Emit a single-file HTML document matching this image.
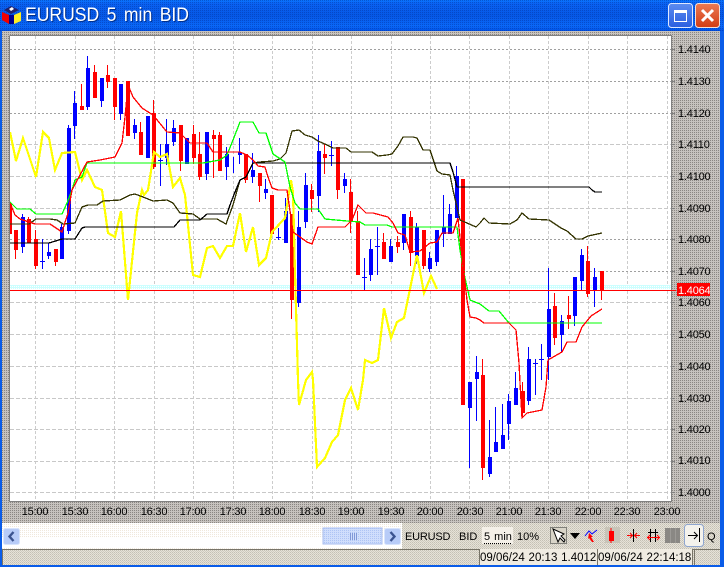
<!DOCTYPE html>
<html><head><meta charset="utf-8"><title>EURUSD 5 min BID</title>
<style>html,body{margin:0;padding:0;width:724px;height:567px;overflow:hidden;background:#c4c0bc}svg{display:block}text{font-family:"Liberation Sans",sans-serif;fill:#000}</style></head>
<body>
<svg xmlns="http://www.w3.org/2000/svg" width="724" height="567" viewBox="0 0 724 567">
<defs>
<pattern id="g" width="2" height="2" patternUnits="userSpaceOnUse"><rect width="2" height="2" fill="#c6c2be"/><rect width="1" height="1" fill="#8a8682"/></pattern>
<pattern id="c" width="2" height="2" patternUnits="userSpaceOnUse"><rect width="2" height="2" fill="#e6e2d8"/><rect width="1" height="1" fill="#c4c0b4"/><rect x="1" y="1" width="1" height="1" fill="#d0ccc0"/></pattern>
<pattern id="w" width="2" height="2" patternUnits="userSpaceOnUse"><rect width="2" height="2" fill="#fff"/><rect width="1" height="1" fill="#f0e8dc"/></pattern>
<pattern id="b" width="2" height="2" patternUnits="userSpaceOnUse"><rect width="2" height="2" fill="#ccffff"/><rect width="1" height="1" fill="#fff"/></pattern>
<pattern id="t" width="2" height="2" patternUnits="userSpaceOnUse"><rect width="1" height="1" fill="#0030a0" opacity=".45"/></pattern>
<pattern id="s" width="2" height="2" patternUnits="userSpaceOnUse"><rect width="2" height="2" fill="#d0defc"/><rect width="1" height="1" fill="#aec4f4"/></pattern>
<linearGradient id="tb" x1="0" y1="0" x2="0" y2="1"><stop offset="0" stop-color="#0a76ff"/><stop offset=".12" stop-color="#0a62f2"/><stop offset=".5" stop-color="#0658e6"/><stop offset=".85" stop-color="#0a68f8"/><stop offset="1" stop-color="#0050e4"/></linearGradient>
<linearGradient id="cl" x1="0" y1="0" x2="0" y2="1"><stop offset="0" stop-color="#ec7a52"/><stop offset="1" stop-color="#d23c14"/></linearGradient>
<linearGradient id="mx" x1="0" y1="0" x2="0" y2="1"><stop offset="0" stop-color="#5c8cf0"/><stop offset="1" stop-color="#2a5ee0"/></linearGradient>
<clipPath id="pl"><rect x="10" y="36" width="661" height="465"/></clipPath>
</defs>

<!-- window frame -->
<rect width="724" height="567" fill="#0a5ce8"/>
<rect width="724" height="31" fill="url(#tb)"/>
<rect width="724" height="31" fill="url(#t)"/>
<rect x="2" y="31" width="718" height="492" fill="url(#g)"/>

<!-- title icon -->
<path d="M2 12L9 15V24L2 20Z" fill="#f00000"/>
<path d="M14 15L21 12V21L14 24Z" fill="#ffee22"/>
<path d="M9 15H14V24H9Z" fill="#000090"/>
<path d="M4 10L11 6L19 10L11 14Z" fill="#20206a"/>
<path d="M9 9L12 7L14 9L11 11Z" fill="#fff"/>
<text transform="translate(26 22) scale(.925 1)" font-size="19" style="fill:#00308c" word-spacing="2.8">EURUSD 5 min BID</text>
<text transform="translate(25 21) scale(.925 1)" font-size="19" style="fill:#fff" word-spacing="2.8">EURUSD 5 min BID</text>

<!-- title buttons -->
<rect x="668.5" y="3.5" width="24" height="24" rx="3" fill="url(#mx)" stroke="#dfe8ff"/>
<rect x="674.5" y="10.5" width="12" height="11" fill="none" stroke="#fff"/>
<rect x="674" y="10" width="13" height="3" fill="#fff"/>
<rect x="695.5" y="3.5" width="24" height="24" rx="3" fill="url(#cl)" stroke="#f4e0d8"/>
<path d="M702 10L713 21M713 10L702 21" stroke="#fff" stroke-width="3" fill="none"/>

<!-- plot -->
<rect x="10" y="36" width="661" height="465" fill="#fff"/>
<path d="M9.5 36V501.5H671.5V35.5H9.5" fill="none" stroke="#808080" shape-rendering="crispEdges"/>
<g shape-rendering="crispEdges" fill="none">
<path d="M35.5 36V501M75.5 36V501M114.5 36V501M154.5 36V501M193.5 36V501M233.5 36V501M272.5 36V501M312.5 36V501M351.5 36V501M391.5 36V501M430.5 36V501M469.5 36V501M509.5 36V501M548.5 36V501M588.5 36V501M627.5 36V501M667.5 36V501" stroke="#cccccc" stroke-dasharray="3 2"/>
<path d="M10 49.5H671M10 81.5H671M10 113.5H671M10 239.5H671M10 271.5H671" stroke="#a0a0a0" stroke-dasharray="2 2"/>
<path d="M10 144.5H671M10 176.5H671M10 208.5H671M10 302.5H671M10 334.5H671M10 366.5H671M10 398.5H671M10 429.5H671M10 461.5H671M10 492.5H671" stroke="#c8c8c8" stroke-dasharray="4 2"/>
</g>
<rect x="10" y="285" width="661" height="4" fill="url(#b)"/>

<g clip-path="url(#pl)" shape-rendering="crispEdges" fill="none">
<!-- blue wicks -->
<path stroke="#0000ff" stroke-width="1" d="M22.5 214V253M42.5 239V269M48.5 243V259M61.5 224V259M68.5 125V234M74.5 91V139M87.5 56V110M101.5 78V107M120.5 84V120M134.5 119V139M147.5 116V158M160.5 144V186M166.5 119V165M173.5 120V146M186.5 138V164M206.5 132V180M226.5 147V180M233.5 157V173M239.5 138V164M252.5 153V183M265.5 179V199M278.5 228V240M285.5 198V243M298.5 211V307M305.5 173V228M318.5 135V212M331.5 141V166M344.5 173V193M364.5 258V290M370.5 239V281M377.5 227V275M390.5 239V262M403.5 214V250M416.5 223V264M429.5 252V272M436.5 230V266M443.5 195V247M449.5 204V234M456.5 166V218M469.5 382V468M476.5 356V421M489.5 420V477M495.5 407V452M502.5 404V449M508.5 394V440M515.5 372V405M528.5 347V405M535.5 359V395M541.5 344V380M548.5 268V380M561.5 315V352M574.5 277V326M581.5 249V290M594.5 268V307"/>
<!-- blue dojis -->
<path stroke="#0000ff" stroke-width="1" d="M40 261.5h5M158 160.5h5M276 237.5h5M329 155.5h5M362 277.5h5M375 246.5h5M533 363.5h5M539 359.5h5"/>
<!-- blue bodies -->
<path stroke="#0000ff" stroke-width="4" d="M23 217V247M49 252V256M62 227V259M69 128V231M75 103V126M88 68V107M102 78V101M121 84V114M135 125V133M148 116V158M167 144V158M174 128V142M187 138V164M207 132V174M227 154V167M240 152V155M253 170V177M266 189V193M286 211V243M299 227V303M306 185V222M319 151V196M345 179V186M371 249V275M391 246V262M404 214V243M417 227V256M430 258V269M437 230V262M444 227V234M450 214V234M457 176V218M470 382V408M477 372V379M490 457V474M496 442V452M503 435V449M509 401V424M516 388V405M529 359V401M549 309V357M562 321V335M575 277V316M582 255V281M595 277V290"/>
<!-- red wicks -->
<path stroke="#ff0000" stroke-width="1" d="M15.5 230V259M28.5 217V243M35.5 230V269M55.5 249V266M81.5 84V110M94.5 65V98M107.5 65V88M114.5 78V120M127.5 81V136M140.5 122V155M153.5 100V169M180.5 125V171M193.5 125V164M199.5 132V180M213.5 130V178M219.5 132V171M245.5 154V183M259.5 173V202M291.5 214V319M311.5 184V212M324.5 144V174M337.5 147V199M350.5 179V233M357.5 211V275M383.5 233V259M397.5 236V253M410.5 211V266M423.5 230V269M482.5 359V480M522.5 382V418M554.5 293V345M568.5 296V329M587.5 246V297M601.5 271V300"/>
<!-- red bodies -->
<path stroke="#ff0000" stroke-width="4" d="M16 230V250M29 219V243M36 239V266M56 249V262M82 106V110M95 72V98M108 75V82M115 78V107M128 81V136M141 132V155M154 113V167M181 125V161M194 134V158M200 154V177M214 135V139M220 135V171M246 154V180M260 173V186M272 195V234M292 214V300M312 190V199M325 154V158M338 147V190M351 192V221M358 221V275M384 242V259M398 242V247M411 217V253M424 230V266M463 179V405M483 375V468M523 391V413M555 306V338M569 315V319M588 261V294M602 271V290"/>
<path stroke="#ff0000" stroke-width="2" d="M11 203V234"/>

<!-- yellow -->
<polyline stroke="#ffff00" stroke-width="2.2" points="10,132 16,161 23,138 36,177 43,132 49,138 55,170 62,153 75,152 82,180 87,170 95,187 102,190 108,233 115,237 121,211 128,300 137,213 142,190 144,195 148,190 154,152 160,157 167,154 173,187 180,178 185,195 193,275 200,277 207,248 213,246 220,258 227,246 233,246 240,213 246,252 253,227 259,265 266,258 272,232 285,218 291,180 293,192 295,273 298,380 299,405 306,380 312,372 313,380 317,467 325,458 332,442 338,435 345,400 351,388 358,410 363,380 365,360 372,363 378,360 384,308 391,338 397,322 404,318 417,255 424,293 431,276 437,289"/>
<!-- olive -->
<polyline stroke="#333300" stroke-width="1.3" points="10,224 29,224 36,219 50,219 57,220 63,224 75,223 82,207 88,205 97,205 103,201 120,200 130,195 135,194 143,197 153,201 167,200 173,203 180,213 193,214 200,219 217,219 226,224 233,205 240,180 246,177 253,163 260,162 273,161 280,159 286,153 289,142 292,131 299,130 305,135 312,137 318,141 327,145 333,148 346,148 351,152 372,152 378,156 387,155 392,154 398,146 403,137 413,137 417,138 423,150 430,150 437,171 442,174 450,175 453,190 456,203 460,220 467,223 476,227 480,223 484,218 489,223 510,224 517,220 522,213 529,219 549,220 561,228 567,231 576,239 582,239 588,236 602,233"/>
<!-- black -->
<polyline stroke="#000" stroke-width="1.3" points="10,243 49,243 62,239 75,239 82,228 85,227 174,227 180,220 200,220 207,214 227,214 230,205 235,192 240,180 246,177 253,163 450,163 453,172 457,187 589,187 592,190 595,192 602,192"/>
<!-- green -->
<polyline stroke="#00ff00" stroke-width="1.3" points="10,202 17,209 30,209 36,214 62,214 67,203 72,190 75,180 82,177 87,163 203,163 220,160 227,155 233,140 240,122 253,122 259,133 266,133 273,154 285,162 290,187 295,203 300,209 318,209 325,219 347,221 360,222 365,225 387,225 392,227 457,227 460,250 465,278 470,300 480,304 489,311 499,311 509,323 602,323"/>
<!-- red MA -->
<polyline stroke="#ff0000" stroke-width="1.3" points="10,203 15,215 20,219 35,224 50,224 62,232 68,213 72,190 80,175 87,162 100,160 110,158 115,157 122,143 125,117 128,85 133,97 142,108 153,115 167,132 180,133 190,143 207,143 213,152 240,152 247,155 253,160 258,166 265,167 268,177 272,188 278,190 287,190 293,232 307,242 312,244 318,227 345,227 352,220 358,205 366,213 373,213 388,217 393,223 398,233 405,235 410,252 420,251 430,243 437,242 442,233 453,233 458,218 462,257 467,300 470,317 476,318 480,320 484,323 509,323 516,330 519,363 520,383 522,418 527,413 542,410 546,387 548,360 562,352 567,342 576,342 582,327 591,316 602,309"/>
</g>
<path d="M10 290.5H676" stroke="#ff0000" shape-rendering="crispEdges"/>

<!-- price axis -->
<g font-size="11" letter-spacing="-.2">
<text x="678" y="53">1.4140</text><text x="678" y="85">1.4130</text><text x="678" y="117">1.4120</text><text x="678" y="148">1.4110</text><text x="678" y="180">1.4100</text><text x="678" y="212">1.4090</text><text x="678" y="243">1.4080</text><text x="678" y="275">1.4070</text><text x="678" y="306">1.4060</text><text x="678" y="338">1.4050</text><text x="678" y="370">1.4040</text><text x="678" y="402">1.4030</text><text x="678" y="433">1.4020</text><text x="678" y="464">1.4010</text><text x="678" y="496">1.4000</text>
</g>
<rect x="677" y="283" width="33" height="13" fill="#ff0000"/>
<text x="678" y="294" font-size="11" letter-spacing="-.2" style="fill:#fff">1.4064</text>
<path d="M672 49.5h3M672 81.5h3M672 113.5h3M672 144.5h3M672 176.5h3M672 208.5h3M672 239.5h3M672 271.5h3M672 302.5h3M672 334.5h3M672 366.5h3M672 398.5h3M672 429.5h3M672 461.5h3M672 492.5h3" stroke="#808080" shape-rendering="crispEdges"/>

<!-- time axis -->
<g font-size="11" letter-spacing="-.2" text-anchor="middle">
<text x="35" y="515">15:00</text><text x="75" y="515">15:30</text><text x="114" y="515">16:00</text><text x="154" y="515">16:30</text><text x="193" y="515">17:00</text><text x="233" y="515">17:30</text><text x="272" y="515">18:00</text><text x="312" y="515">18:30</text><text x="351" y="515">19:00</text><text x="391" y="515">19:30</text><text x="430" y="515">20:00</text><text x="470" y="515">20:30</text><text x="509" y="515">21:00</text><text x="548" y="515">21:30</text><text x="588" y="515">22:00</text><text x="627" y="515">22:30</text><text x="667" y="515">23:00</text>
</g>

<!-- toolbar row -->
<rect x="2" y="523" width="718" height="26" fill="url(#w)"/>
<rect x="2" y="537" width="400" height="11" fill="#fff"/>
<rect x="402" y="523" width="318" height="26" fill="url(#c)"/>
<rect x="3.5" y="528.5" width="16" height="16" rx="2" fill="#b8ccf8" stroke="#d8e4fc"/>
<path d="M13.5 532L9.5 536.5L13.5 541" fill="none" stroke="#3c5490" stroke-width="2.4"/>
<rect x="323" y="528" width="59" height="16" fill="url(#s)" stroke="#a8bef0"/>
<path d="M350.5 533v7M352.5 533v7M354.5 533v7M356.5 533v7" stroke="#8098d8" shape-rendering="crispEdges"/>
<rect x="384.5" y="528.5" width="16" height="16" rx="2" fill="#b8ccf8" stroke="#d8e4fc"/>
<path d="M390.5 532L394.5 536.5L390.5 541" fill="none" stroke="#3c5490" stroke-width="2.4"/>
<text x="405" y="540" font-size="11" letter-spacing="-.2">EURUSD</text>
<text x="459" y="540" font-size="11">BID</text>
<rect x="482" y="527" width="31" height="17" fill="#f4f0e8"/>
<text x="484" y="540" font-size="11" word-spacing="1">5 min</text>
<path d="M484 543.5h27" stroke="#000" stroke-dasharray="1 1" shape-rendering="crispEdges"/>
<text x="517" y="540" font-size="11">10%</text>

<!-- tool icons -->
<rect x="550.5" y="527.5" width="16" height="16" fill="#d8d4c8" stroke="#80807a"/>
<path d="M553 529L558 542L560 538L564 542L565 540L561 536L564 534Z" fill="#fff" stroke="#000"/>
<path d="M570 533H580L575 539Z" fill="#000"/>
<path d="M585 536L589 531L592 534L597 530" fill="none" stroke="#0000ff"/>
<path d="M589 533L593 537H591L594 542H592L589 538L588 539Z" fill="#ff0000"/>
<rect x="605" y="527" width="15" height="16" fill="#c8c4b8"/>
<path d="M611 528V543" stroke="#ff0000" shape-rendering="crispEdges"/>
<rect x="609" y="531" width="5" height="10" fill="#ff0000"/>
<path d="M633.5 529V542" stroke="#000" shape-rendering="crispEdges"/>
<path d="M627 535.5H632M630 533L632.5 535.5L630 538M640 535.5H635M637 533L634.5 535.5L637 538" fill="none" stroke="#ff0000"/>
<path d="M650.5 529V542M655.5 529V542M648 532.5H658" stroke="#000" shape-rendering="crispEdges"/>
<path d="M647 537.5H660M650 535L647.5 537.5L650 540M657 535L659.5 537.5L657 540" fill="none" stroke="#ff0000"/>
<rect x="665" y="528" width="15" height="15" fill="#8a8884"/>
<path d="M670.5 528V543M675.5 528V543" stroke="#9c9a96" shape-rendering="crispEdges"/>
<rect x="684.5" y="524.5" width="19" height="22" rx="3" fill="#f4f2ec" stroke="#8fa6d0"/>
<path d="M688 535.5H697M694 532L697.5 535.5L694 539" fill="none" stroke="#000"/>
<path d="M699.5 528V542" stroke="#000" shape-rendering="crispEdges"/>
<text x="707" y="540" font-size="11">Q</text>

<!-- status bar -->
<rect x="2" y="549" width="718" height="16" fill="url(#c)"/>
<path d="M2 549.5H720" stroke="#787468" stroke-width="1" shape-rendering="crispEdges"/>
<path d="M2.5 549V565" stroke="#787468" shape-rendering="crispEdges"/>
<rect x="479" y="549" width="118" height="16" fill="#f0ece2"/>
<rect x="597" y="549" width="95" height="16" fill="#f0ece2"/>
<path d="M479.5 549V565M597.5 549V565M692.5 549V565M694.5 549V565" stroke="#787468" shape-rendering="crispEdges"/>
<text x="480" y="561" font-size="11.5" word-spacing=".6">09/06/24 20:13 1.4012</text>
<text x="598" y="561" font-size="11.5" word-spacing=".6">09/06/24 22:14:18</text>
<rect x="0" y="565" width="724" height="2" fill="#0a5ce8"/>
</svg>
</body></html>
